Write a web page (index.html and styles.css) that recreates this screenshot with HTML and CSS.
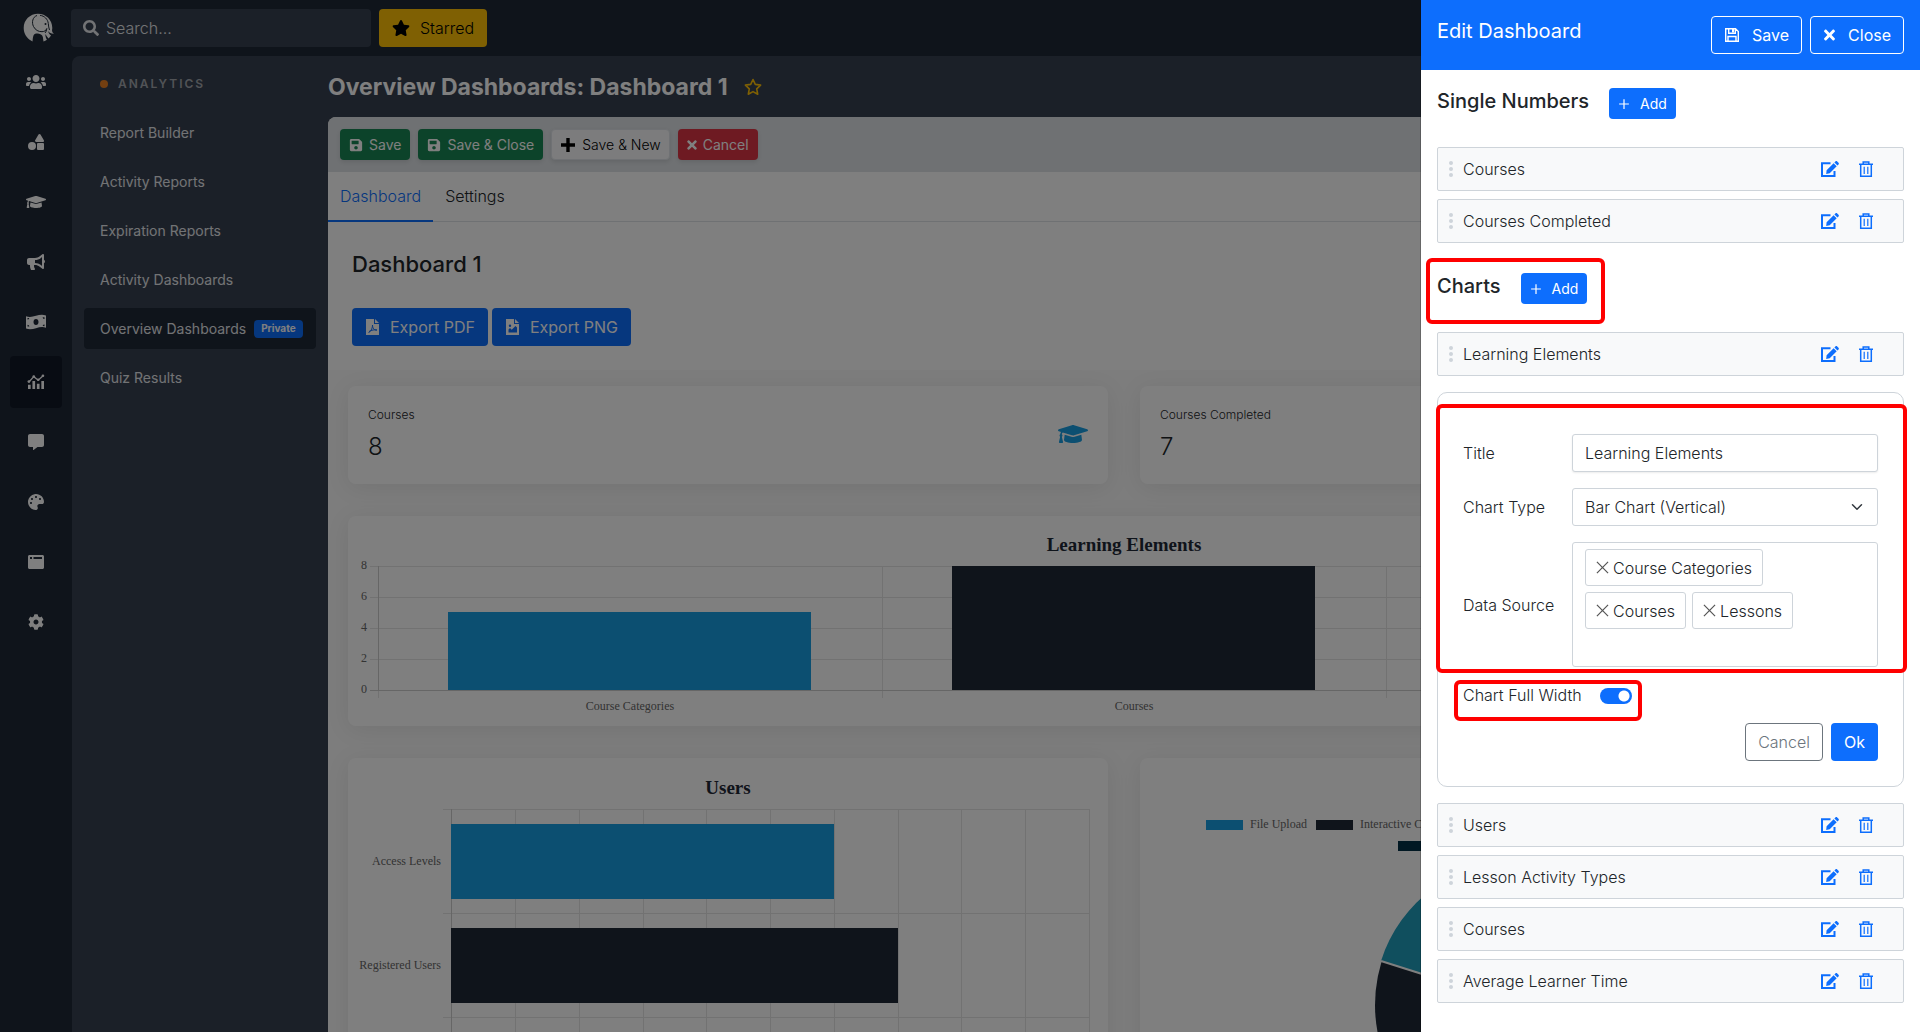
FILE: index.html
```html
<!DOCTYPE html>
<html lang="en">
<head>
<meta charset="utf-8">
<title>Overview Dashboards: Dashboard 1</title>
<link rel="stylesheet" href="styles.css">
</head>
<body>

<svg class="sprite" aria-hidden="true">
  <symbol id="i-logo" viewBox="0 0 31 30">
    <path fill="currentColor" d="M15 .8C7 .8.700 7 .700 15c0 5.500 3 10.300 7.600 12.700L9.500 28.500c.3-2 .2-4.200 1-6 .7-1.600 2.500-2.200 4.500-1.900 2.800.400 4.500 1.500 4.900 3.700.2 1.500.4 2.900.6 4.200 1.200-.4 2.400-1 3.400-1.700-.9-1.700-1.600-3.600-1.500-5.900 1 1.800 2 3.400 3.200 4.600 1-.9 1.700-1.800 2.400-2.900-1.700-1.100-2.500-2.600-3-4.500 1.500 1.900 3.500 2.900 6 2.700-1.500-.9-2.200-2.400-1.900-4.200.1-.6.200-1.100.2-1.600C29.300 7 23 .8 15 .8z"/>
    <path fill="none" stroke="#1e2836" d="M14 2.500C9.500 4 8.500 9.500 10.500 13.500c1.800 3.600 5 5.300 8.500 5.200 2.500-.1 4-1.200 4.800-3.200M17 2.300c4.500.7 7.700 3.700 8.300 8.200.3 2.500.4 4.500 1.200 6.500M23.800 15.500c-.3 2-.7 3.300-1.800 4.500"/>
    <circle cx="22.500" cy="11" r="1" fill="#1e2836"/>
  </symbol>
  <symbol id="i-search" viewBox="0 0 512 512"><path fill="currentColor" d="M505 442.700L405.300 343c-4.500-4.500-10.600-7-17-7H372c27.600-35.300 44-79.700 44-128C416 93.100 322.900 0 208 0S0 93.100 0 208s93.100 208 208 208c48.300 0 92.700-16.400 128-44v16.300c0 6.400 2.500 12.500 7 17l99.700 99.700c9.400 9.400 24.600 9.400 33.900 0l28.300-28.300c9.400-9.400 9.400-24.600.1-34zM208 336c-70.700 0-128-57.200-128-128 0-70.700 57.200-128 128-128 70.700 0 128 57.200 128 128 0 70.700-57.200 128-128 128z"/></symbol>
  <symbol id="i-star" viewBox="0 0 576 512"><path fill="currentColor" d="M259.300 17.800L194 150.200 47.900 171.500c-26.200 3.800-36.700 36.100-17.700 54.600l105.700 103-25 145.500c-4.500 26.300 23.200 46 46.400 33.700L288 439.600l130.700 68.700c23.200 12.200 50.900-7.400 46.400-33.700l-25-145.500 105.700-103c19-18.500 8.500-50.800-17.700-54.600L382 150.200 316.700 17.800c-11.700-23.600-45.600-23.900-57.400 0z"/></symbol>
  <symbol id="i-star-o" viewBox="0 0 18 18"><path fill="none" stroke="currentColor" stroke-width="1.600" stroke-linejoin="round" d="M9 1.500l2.300 4.900 5.300.7-3.900 3.700 1 5.400L9 13.600l-4.700 2.600 1-5.400L1.400 7.100l5.300-.7z"/></symbol>
  <symbol id="i-users" viewBox="0 0 640 512"><path fill="currentColor" d="M96 224c35.300 0 64-28.700 64-64s-28.700-64-64-64-64 28.700-64 64 28.700 64 64 64zm448 0c35.300 0 64-28.700 64-64s-28.700-64-64-64-64 28.700-64 64 28.700 64 64 64zm32 32h-64c-17.600 0-33.500 7.100-45.100 18.600 40.300 22.100 68.900 62 75.100 109.400h66c17.700 0 32-14.300 32-32v-32c0-35.300-28.700-64-64-64zm-256 0c61.900 0 112-50.100 112-112S381.900 32 320 32 208 82.100 208 144s50.100 112 112 112zm76.800 32h-8.300c-20.800 10-43.900 16-68.500 16s-47.600-6-68.500-16h-8.300C179.600 288 128 339.600 128 403.200V432c0 26.500 21.500 48 48 48h288c26.500 0 48-21.500 48-48v-28.800c0-63.600-51.600-115.200-115.200-115.200zm-223.700-13.400C161.500 263.100 145.600 256 128 256H64c-35.300 0-64 28.700-64 64v32c0 17.700 14.300 32 32 32h65.900c6.300-47.400 34.900-87.300 75.200-109.400z"/></symbol>
  <symbol id="i-shapes" viewBox="0 0 512 512"><path fill="currentColor" d="M128,256A128,128,0,1,0,256,384,128,128,0,0,0,128,256Zm379-54.860L400.070,18.290a37.260,37.260,0,0,0-64.140,0L229,201.140C214.760,225.520,232.580,256,261.090,256H474.910C503.420,256,521.240,225.520,507,201.140ZM480,288H320a32,32,0,0,0-32,32V480a32,32,0,0,0,32,32H480a32,32,0,0,0,32-32V320A32,32,0,0,0,480,288Z"/></symbol>
  <symbol id="i-cap" viewBox="0 0 640 512"><path fill="currentColor" d="M622.340 153.200L343.400 67.500c-15.200-4.670-31.600-4.670-46.790 0L17.660 153.200c-23.540 7.230-23.540 38.360 0 45.590l48.630 14.940c-10.670 13.190-17.230 29.280-17.880 46.900C38.780 266.150 32 276.110 32 288c0 10.780 5.680 19.850 13.860 25.650L20.330 428.530C18.110 438.520 25.710 448 35.940 448h56.110c10.240 0 17.840-9.480 15.620-19.470L82.140 313.650C90.320 307.850 96 298.780 96 288c0-11.570-6.470-21.250-15.660-26.870.76-15.020 8.440-28.300 20.690-36.720L296.600 284.500c9.060 2.780 26.440 6.250 46.790 0l278.950-85.700c23.550-7.240 23.550-38.360 0-45.600zM352.790 315.090c-28.530 8.760-52.840 3.920-65.590 0l-145.020-44.550L128 384c0 35.350 85.960 64 192 64s192-28.650 192-64l-14.180-113.470-145.030 44.560z"/></symbol>
  <symbol id="i-horn" viewBox="0 0 576 512"><path fill="currentColor" d="M576 240c0-23.630-12.950-44.040-32-55.120V32.010C544 23.260 537.020 0 512 0c-7.120 0-14.190 2.380-19.980 7.020l-85.030 68.030C364.280 109.190 310.660 128 256 128H64c-35.350 0-64 28.650-64 64v96c0 35.350 28.650 64 64 64h33.700c-1.390 10.480-2.180 21.140-2.180 32 0 39.770 9.260 77.350 25.560 110.940 5.190 10.690 16.520 17.060 28.400 17.060h74.280c26.050 0 41.690-29.840 25.900-50.560-16.400-21.520-26.150-48.360-26.150-77.440 0-11.110 1.620-21.790 4.410-32H256c54.660 0 108.280 18.810 150.980 52.950l85.030 68.030a32.023 32.023 0 0 0 19.980 7.020c24.920 0 32-22.780 32-32V295.130C563.050 284.040 576 263.630 576 240zm-96 141.420l-33.050-26.440C392.950 311.780 325.120 288 256 288v-96c69.120 0 136.950-23.780 190.950-66.980L480 98.580v282.840z"/></symbol>
  <symbol id="i-money" viewBox="0 0 20 16"><path fill="currentColor" fill-rule="evenodd" d="M0 2.200c3.500 1.300 6.500.5 10-.4 3.300-.9 6.500-1.500 10-.3v12.300c-3.500-1.300-6.500-.5-10 .4-3.300.9-6.500 1.500-10 .3zM10 5C8.500 5 7.500 6.300 7.500 8s1 3 2.500 3 2.500-1.300 2.500-3-1-3-2.500-3zM1.500 4v1.600c1 0 1.700-.7 1.700-1.500zM1.500 10.800v1.700l1.800.1c0-1-.8-1.800-1.800-1.800zM18.500 3.300l-1.800-.1c0 1 .8 1.800 1.800 1.800zM18.500 10.400c-1 0-1.800.7-1.800 1.700l1.800.2z"/></symbol>
  <symbol id="i-chart" viewBox="0 0 20 18"><path fill="currentColor" d="M1 12h3v5H1zM6 8h3v9H6zM11 11h3v6h-3zM16 8h3v9h-3z"/><path fill="none" stroke="currentColor" stroke-width="1.500" d="M2 9l5.500-6 5 4L18 2"/><circle cx="2" cy="8.500" r="1.500" fill="currentColor"/><circle cx="7.500" cy="2.800" r="1.500" fill="currentColor"/><circle cx="12.500" cy="6.500" r="1.500" fill="currentColor"/><circle cx="17.800" cy="2" r="1.500" fill="currentColor"/></symbol>
  <symbol id="i-comment" viewBox="0 0 512 512"><path fill="currentColor" d="M448 0H64C28.700 0 0 28.700 0 64v288c0 35.300 28.700 64 64 64h96v84c0 9.800 11.200 15.500 19.100 9.700L304 416h144c35.300 0 64-28.700 64-64V64c0-35.300-28.700-64-64-64z"/></symbol>
  <symbol id="i-palette" viewBox="0 0 512 512"><path fill="currentColor" d="M204.300 5C104.900 24.400 24.800 104.300 5.200 203.400c-37 187 131.700 326.400 258.800 306.700 41.200-6.400 61.400-54.600 42.500-91.700-23.100-45.400 9.900-98.400 60.900-98.400h79.700c35.800 0 64.800-29.600 64.900-65.300C511.500 97.100 368.100-26.900 204.300 5zM96 320c-17.700 0-32-14.300-32-32s14.300-32 32-32 32 14.300 32 32-14.300 32-32 32zm32-128c-17.700 0-32-14.300-32-32s14.300-32 32-32 32 14.300 32 32-14.300 32-32 32zm128-64c-17.700 0-32-14.300-32-32s14.300-32 32-32 32 14.300 32 32-14.300 32-32 32zm128 64c-17.700 0-32-14.300-32-32s14.300-32 32-32 32 14.300 32 32-14.300 32-32 32z"/></symbol>
  <symbol id="i-window" viewBox="0 0 16 16"><path fill="currentColor" fill-rule="evenodd" d="M1.500 1h13c.8 0 1.500.7 1.500 1.500v11c0 .8-.7 1.500-1.500 1.500h-13C.7 15 0 14.300 0 13.500v-11C0 1.700.7 1 1.500 1zM2 3v2h2V3zM5.500 3v2H14V3z"/></symbol>
  <symbol id="i-cog" viewBox="0 0 512 512"><path fill="currentColor" d="M487.400 315.700l-42.600-24.600c4.300-23.200 4.300-47 0-70.200l42.600-24.600c4.900-2.800 7.100-8.600 5.500-14-11.100-35.600-30-67.800-54.700-94.600-3.800-4.100-10-5.100-14.800-2.300L380.800 110c-17.900-15.400-38.500-27.300-60.800-35.100V25.800c0-5.600-3.900-10.500-9.400-11.700-36.700-8.200-74.300-7.800-109.200 0-5.500 1.200-9.400 6.100-9.400 11.700V75c-22.200 7.900-42.800 19.800-60.800 35.100L88.700 85.500c-4.900-2.800-11-1.900-14.800 2.300-24.700 26.700-43.600 58.900-54.700 94.600-1.700 5.400.6 11.200 5.500 14L67.300 221c-4.300 23.200-4.300 47 0 70.200l-42.600 24.600c-4.900 2.800-7.100 8.600-5.500 14 11.100 35.600 30 67.800 54.700 94.600 3.800 4.100 10 5.100 14.800 2.300l42.600-24.600c17.900 15.400 38.500 27.300 60.800 35.100v49.200c0 5.600 3.900 10.500 9.400 11.700 36.700 8.200 74.300 7.800 109.200 0 5.500-1.200 9.400-6.100 9.400-11.700v-49.200c22.200-7.900 42.800-19.800 60.800-35.100l42.600 24.600c4.900 2.800 11 1.900 14.800-2.300 24.700-26.700 43.600-58.900 54.700-94.600 1.500-5.500-.7-11.300-5.600-14.100zM256 336c-44.100 0-80-35.900-80-80s35.900-80 80-80 80 35.900 80 80-35.900 80-80 80z"/></symbol>
  <symbol id="i-save" viewBox="0 0 448 512"><path fill="currentColor" d="M433.941 129.941l-83.882-83.882A48 48 0 0 0 316.118 32H48C21.490 32 0 53.490 0 80v352c0 26.510 21.490 48 48 48h352c26.510 0 48-21.490 48-48V163.882a48 48 0 0 0-14.059-33.941zM224 416c-35.346 0-64-28.654-64-64 0-35.346 28.654-64 64-64s64 28.654 64 64c0 35.346-28.654 64-64 64zm96-304.520V212c0 6.627-5.373 12-12 12H76c-6.627 0-12-5.373-12-12V108c0-6.627 5.373-12 12-12h228.520c3.183 0 6.235 1.264 8.485 3.515l3.480 3.480A11.996 11.996 0 0 1 320 111.480z"/></symbol>
  <symbol id="i-floppy" viewBox="0 0 16 16"><path fill="none" stroke="currentColor" stroke-width="1.400" d="M1.700 1.700h9.800l2.800 2.800v9.800H1.700zM4 14V9.500h8V14M4.700 2v4.300h6.600V2"/><path fill="currentColor" d="M8 2h2v3.500H8z"/></symbol>
  <symbol id="i-times" viewBox="0 0 352 512"><path fill="currentColor" d="M242.720 256l100.070-100.070c12.280-12.280 12.280-32.190 0-44.480l-22.240-22.240c-12.280-12.280-32.190-12.280-44.480 0L176 189.280 75.930 89.210c-12.280-12.280-32.190-12.280-44.480 0L9.210 111.450c-12.280 12.280-12.280 32.190 0 44.480L109.280 256 9.210 356.070c-12.280 12.280-12.280 32.190 0 44.480l22.240 22.240c12.280 12.280 32.200 12.280 44.480 0L176 322.720l100.070 100.070c12.280 12.280 32.200 12.280 44.480 0l22.240-22.240c12.280-12.280 12.280-32.190 0-44.480L242.720 256z"/></symbol>
  <symbol id="i-plus" viewBox="0 0 16 16"><path fill="currentColor" d="M6.300 1h3.400v5.300H15v3.400H9.700V15H6.300V9.700H1V6.300h5.300z"/></symbol>
  <symbol id="i-plus-thin" viewBox="0 0 16 16"><path fill="none" stroke="currentColor" stroke-width="1.600" d="M8 1.500v13M1.500 8h13"/></symbol>
  <symbol id="i-pdf" viewBox="0 0 14 16"><path fill="currentColor" d="M0 0h8v5h5v11H0zM9 0l4 4H9z"/><path fill="none" stroke="#0d6efd" d="M2.500 13.500c2-.5 4-4 4-7.500 0 3.500 2 5.500 4.500 5-3-.5-5 0-8 1.500"/></symbol>
  <symbol id="i-png" viewBox="0 0 14 16"><path fill="currentColor" d="M0 0h8v5h5v11H0zM9 0l4 4H9z"/><path fill="#0d6efd" d="M2.500 13.500v-3l1.500-1.500 1.700 1.700L9.500 7l1.500 1.500v5z"/><circle cx="4" cy="6.800" r="1.200" fill="#0d6efd"/></symbol>
  <symbol id="i-edit" viewBox="0 0 18 16"><path fill="none" stroke="currentColor" stroke-width="2" d="M9.500 2.200H1V15h12.500V10"/><path fill="currentColor" d="M12.600 2.200l3.100 3.100-7 7-3.500.6.400-3.600zM13.400 1.400l1-1c.5-.5 1.300-.5 1.800 0l1.300 1.300c.5.500.5 1.300 0 1.800l-1 1z"/></symbol>
  <symbol id="i-trash" viewBox="0 0 14 16"><path fill="none" stroke="currentColor" stroke-width="1.500" d="M0 3.300h14M1.700 3.500v11.700h10.600V3.500M4.200 3V.9h5.600V3"/><path fill="none" stroke="currentColor" stroke-width="1.200" d="M5.200 5.800V13M8.800 5.800V13"/></symbol>
  <symbol id="i-grip" viewBox="0 0 4 16"><g fill="#ced4da"><circle cx="2" cy="2" r="2"/><circle cx="2" cy="8" r="2"/><circle cx="2" cy="14" r="2"/></g></symbol>
  <symbol id="i-x" viewBox="0 0 14 14"><path fill="none" stroke="currentColor" stroke-width="1.300" d="M1 1l12 12M13 1L1 13"/></symbol>
</svg>

<header class="topbar">
  <a class="logo" href="#" aria-label="Home"><svg><use href="#i-logo"/></svg></a>
  <label class="search">
    <svg class="icon"><use href="#i-search"/></svg>
    <input type="text" placeholder="Search..." aria-label="Search">
  </label>
  <button type="button" class="btn btn-warning"><svg class="icon"><use href="#i-star"/></svg>Starred</button>
</header>

<div class="shell">
  <nav class="rail" aria-label="Main">
    <a href="#" aria-label="Users"><svg class="wide"><use href="#i-users"/></svg></a>
    <a href="#" aria-label="Content"><svg><use href="#i-shapes"/></svg></a>
    <a href="#" aria-label="Courses"><svg class="wide"><use href="#i-cap"/></svg></a>
    <a href="#" aria-label="Marketing"><svg class="wide"><use href="#i-horn"/></svg></a>
    <a href="#" aria-label="Billing"><svg class="wide"><use href="#i-money"/></svg></a>
    <a href="#" aria-label="Analytics" class="active"><svg class="wide"><use href="#i-chart"/></svg></a>
    <a href="#" aria-label="Messages"><svg><use href="#i-comment"/></svg></a>
    <a href="#" aria-label="Themes"><svg><use href="#i-palette"/></svg></a>
    <a href="#" aria-label="Pages"><svg><use href="#i-window"/></svg></a>
    <a href="#" aria-label="Configuration"><svg><use href="#i-cog"/></svg></a>
  </nav>

  <div class="workspace">
    <nav class="submenu" aria-label="Analytics">
      <h2>ANALYTICS</h2>
      <a href="#">Report Builder</a>
      <a href="#">Activity Reports</a>
      <a href="#">Expiration Reports</a>
      <a href="#">Activity Dashboards</a>
      <a href="#" class="active">Overview Dashboards <span class="badge">Private</span></a>
      <a href="#">Quiz Results</a>
    </nav>

    <main class="main">
      <div class="page-title">
        <h1>Overview Dashboards: Dashboard 1</h1>
        <svg class="fav"><use href="#i-star-o"/></svg>
      </div>
      <div class="content">
        <div class="toolbar">
          <button type="button" class="btn btn-sm btn-success"><svg class="icon"><use href="#i-save"/></svg>Save</button>
          <button type="button" class="btn btn-sm btn-success"><svg class="icon"><use href="#i-save"/></svg>Save &amp; Close</button>
          <button type="button" class="btn btn-sm btn-light"><svg class="icon"><use href="#i-plus"/></svg>Save &amp; New</button>
          <button type="button" class="btn btn-sm btn-danger"><svg class="icon narrow"><use href="#i-times"/></svg>Cancel</button>
        </div>
        <div class="tabs">
          <a href="#" class="active">Dashboard</a>
          <a href="#">Settings</a>
        </div>
        <div class="intro">
          <h2>Dashboard 1</h2>
          <div class="exports">
            <button type="button" class="btn btn-primary"><svg class="icon"><use href="#i-pdf"/></svg>Export PDF</button>
            <button type="button" class="btn btn-primary"><svg class="icon"><use href="#i-png"/></svg>Export PNG</button>
          </div>
        </div>
        <div class="cards">
          <div class="card stat">
            <div><p>Courses</p><strong>8</strong></div>
            <svg><use href="#i-cap"/></svg>
          </div>
          <div class="card stat">
            <div><p>Courses Completed</p><strong>7</strong></div>
          </div>

          <div class="card full">
            <svg class="chart" viewBox="0 0 1552 210" role="img" aria-label="Learning Elements">
              <path class="grid" d="M22 50h1520M22 81h1520M22 112h1520M22 143h1520M30 50v132M534 50v132M1038 50v132M1542 50v132"/>
              <path class="axis" d="M22 174h1520M30 50v124"/>
              <rect class="blue" x="100" y="96" width="363" height="78"/>
              <rect class="dark" x="604" y="50" width="363" height="124"/>
              <text class="title" x="776" y="35">Learning Elements</text>
              <g class="end"><text x="19" y="53">8</text><text x="19" y="84">6</text><text x="19" y="115">4</text><text x="19" y="146">2</text><text x="19" y="177">0</text></g>
              <g class="mid"><text x="282" y="194">Course Categories</text><text x="786" y="194">Courses</text></g>
            </svg>
          </div>

          <div class="card">
            <svg class="chart" viewBox="0 0 760 400" role="img" aria-label="Users">
              <path class="grid" d="M95 51h647M95 155h647M95 259h647M167 51v312M231 51v312M295 51v312M358 51v312M422 51v312M486 51v312M550 51v312M613 51v312M677 51v312M741 51v312"/>
              <path class="axis" d="M103 51v312"/>
              <rect class="blue" x="103" y="66" width="383" height="75"/>
              <rect class="dark" x="103" y="170" width="447" height="75"/>
              <rect class="orange" x="103" y="274" width="256" height="75"/>
              <text class="title" x="380" y="36">Users</text>
              <g class="end"><text x="93" y="107">Access Levels</text><text x="93" y="211">Registered Users</text></g>
            </svg>
          </div>
          <div class="card">
            <svg class="chart" viewBox="0 0 760 400" role="img" aria-label="Lesson Activity Types">
              <rect class="blue" x="66" y="62" width="37" height="10"/>
              <rect class="dark" x="176" y="62" width="37" height="10"/>
              <rect class="navy" x="258" y="83" width="37" height="10"/>
              <text x="110" y="70">File Upload</text>
              <text x="220" y="70">Interactive Content</text>
              <circle class="dark" cx="380" cy="247" r="145"/>
              <path class="teal" d="M380 247L241 203A145 145 0 0 1 380 102z"/>
              <path class="cut" d="M380 247L241 203"/>
            </svg>
          </div>
        </div>
      </div>
    </main>
  </div>
</div>

<div class="backdrop"></div>

<aside class="panel" aria-label="Edit Dashboard">
  <div class="panel-head">
    <h2>Edit Dashboard</h2>
    <div class="actions">
      <button type="button" class="btn btn-outline-light"><svg class="icon"><use href="#i-floppy"/></svg>Save</button>
      <button type="button" class="btn btn-outline-light"><svg class="icon narrow"><use href="#i-times"/></svg>Close</button>
    </div>
  </div>

  <div class="panel-body">
    <div class="section-head">
      <h3>Single Numbers</h3>
      <button type="button" class="btn btn-sm btn-primary btn-add"><svg class="icon"><use href="#i-plus-thin"/></svg>Add</button>
    </div>
    <ul class="items">
      <li><svg class="grip"><use href="#i-grip"/></svg><span>Courses</span><button type="button" aria-label="Edit"><svg><use href="#i-edit"/></svg></button><button type="button" aria-label="Delete"><svg class="trash"><use href="#i-trash"/></svg></button></li>
      <li><svg class="grip"><use href="#i-grip"/></svg><span>Courses Completed</span><button type="button" aria-label="Edit"><svg><use href="#i-edit"/></svg></button><button type="button" aria-label="Delete"><svg class="trash"><use href="#i-trash"/></svg></button></li>
    </ul>

    <div class="section-head mark mark-head">
      <h3>Charts</h3>
      <button type="button" class="btn btn-sm btn-primary btn-add"><svg class="icon"><use href="#i-plus-thin"/></svg>Add</button>
    </div>
    <ul class="items">
      <li><svg class="grip"><use href="#i-grip"/></svg><span>Learning Elements</span><button type="button" aria-label="Edit"><svg><use href="#i-edit"/></svg></button><button type="button" aria-label="Delete"><svg class="trash"><use href="#i-trash"/></svg></button></li>
    </ul>

    <form class="editor">
      <div class="fields mark mark-fields">
        <label for="title">Title</label>
        <input class="control" id="title" type="text" value="Learning Elements">
        <label for="type">Chart Type</label>
        <select class="control" id="type"><option>Bar Chart (Vertical)</option></select>
        <span id="source">Data Source</span>
        <div class="control tags" role="group" aria-labelledby="source">
          <button type="button"><svg><use href="#i-x"/></svg>Course Categories</button>
          <button type="button"><svg><use href="#i-x"/></svg>Courses</button>
          <button type="button"><svg><use href="#i-x"/></svg>Lessons</button>
        </div>
      </div>
      <div class="switch mark mark-switch">
        <label for="full">Chart Full Width</label>
        <input id="full" type="checkbox" role="switch" checked>
      </div>
      <div class="actions">
        <button type="button" class="btn btn-outline-secondary">Cancel</button>
        <button type="button" class="btn btn-primary">Ok</button>
      </div>
    </form>

    <ul class="items">
      <li><svg class="grip"><use href="#i-grip"/></svg><span>Users</span><button type="button" aria-label="Edit"><svg><use href="#i-edit"/></svg></button><button type="button" aria-label="Delete"><svg class="trash"><use href="#i-trash"/></svg></button></li>
      <li><svg class="grip"><use href="#i-grip"/></svg><span>Lesson Activity Types</span><button type="button" aria-label="Edit"><svg><use href="#i-edit"/></svg></button><button type="button" aria-label="Delete"><svg class="trash"><use href="#i-trash"/></svg></button></li>
      <li><svg class="grip"><use href="#i-grip"/></svg><span>Courses</span><button type="button" aria-label="Edit"><svg><use href="#i-edit"/></svg></button><button type="button" aria-label="Delete"><svg class="trash"><use href="#i-trash"/></svg></button></li>
      <li><svg class="grip"><use href="#i-grip"/></svg><span>Average Learner Time</span><button type="button" aria-label="Edit"><svg><use href="#i-edit"/></svg></button><button type="button" aria-label="Delete"><svg class="trash"><use href="#i-trash"/></svg></button></li>
    </ul>
  </div>
</aside>

</body>
</html>
```

FILE: styles.css
```css
* {
  box-sizing: border-box;
}
body {
  margin: 0;
  height: 100vh;
  display: flex;
  flex-direction: column;
  overflow: hidden;
  background: #1e2836;
  color: #212529;
  font: 300 16px/24px Inter, sans-serif;
}
h1, h2, h3, p, ul {
  margin: 0;
  padding: 0;
}
a {
  text-decoration: none;
}
.sprite {
  position: absolute;
  width: 0;
  height: 0;
}

/* buttons */
.btn {
  display: inline-flex;
  align-items: center;
  gap: 12px;
  height: 38px;
  padding: 0 12px;
  border: 1px solid transparent;
  border-radius: 4px;
  background: none;
  color: #fff;
  font: 400 16px/24px Inter, sans-serif;
  white-space: nowrap;
}
.btn .icon {
  width: 16px;
  height: 16px;
}
.btn .narrow {
  width: 12px;
}
.btn-sm {
  height: 31px;
  padding: 0 8px;
  gap: 6px;
  font-size: 14px;
}
.btn-sm .icon {
  width: 14px;
  height: 14px;
}
.btn-sm .narrow {
  width: 10px;
}
.btn-warning {
  gap: 10px;
  background: #ffc107;
  color: #000;
  font-weight: 300;
}
.btn-warning .icon {
  width: 18px;
}
.btn-primary { background: #0d6efd; }
.btn-success { background: #198754; }
.btn-danger  { background: #dc3545; }
.btn-light {
  background: #f8f9fa;
  border-color: #dfe3e8;
  color: #000;
  font-weight: 300;
}
.btn-light .icon {
  width: 16px;
  height: 16px;
}
.btn-outline-light { border-color: #fff; }
.btn-outline-secondary {
  border-color: #6c757d;
  color: #6c757d;
  font-weight: 300;
}
.btn-add {
  gap: 10px;
}
.btn-add .icon {
  width: 12px;
}

/* top bar */
.topbar {
  display: flex;
  align-items: center;
  gap: 8px;
  height: 56px;
  padding: 0 0 0 23px;
}
.logo {
  display: flex;
  width: 40px;
  color: #fff;
}
.logo svg {
  width: 31px;
  height: 30px;
}
.search {
  display: flex;
  align-items: center;
  gap: 7px;
  width: 300px;
  height: 38px;
  padding: 0 12px;
  border-radius: 4px;
  background: #374151;
  color: #e5e7eb;
}
.search .icon {
  width: 16px;
  height: 16px;
  flex: none;
}
.search input {
  min-width: 0;
  flex: 1;
  padding: 0;
  border: 0;
  background: none;
  color: inherit;
  font: 300 16px/24px Inter, sans-serif;
}
.search input::placeholder {
  color: #e5e7eb;
}

/* shell */
.shell {
  flex: 1;
  min-height: 0;
  display: flex;
}
.rail {
  flex: none;
  width: 72px;
  display: flex;
  flex-direction: column;
  align-items: center;
  gap: 8px;
}
.rail a {
  width: 52px;
  height: 52px;
  display: flex;
  align-items: center;
  justify-content: center;
  border-radius: 4px;
  color: #fff;
}
.rail a.active {
  background: #111827;
}
.rail svg {
  width: 16px;
  height: 16px;
}
.rail svg.wide {
  width: 20px;
}
.workspace {
  flex: 1;
  min-width: 0;
  display: flex;
  border-radius: 8px 0 0 0;
  background: #374151;
}
.submenu {
  flex: none;
  width: 256px;
  padding: 20px 12px;
  display: flex;
  flex-direction: column;
  gap: 8px;
}
.submenu h2 {
  display: flex;
  align-items: center;
  gap: 10px;
  margin-bottom: 12px;
  padding-left: 16px;
  color: #a3a7ad;
  font-size: 12px;
  line-height: 16px;
  font-weight: 600;
  letter-spacing: 2px;
}
.submenu h2::before {
  content: "";
  width: 8px;
  height: 8px;
  border-radius: 50%;
  background: #e67e22;
}
.submenu a {
  display: flex;
  align-items: center;
  gap: 8px;
  height: 41px;
  padding: 0 16px;
  border-radius: 4px;
  color: #e5e7eb;
  font-size: 14px;
  font-weight: 400;
  white-space: nowrap;
}
.submenu a.active {
  background: #1e2836;
}
.badge {
  height: 18px;
  padding: 0 7px;
  border-radius: 4px;
  background: #0d6efd;
  color: #fff;
  font-size: 10px;
  line-height: 16px;
  font-weight: 700;
}

/* page */
.main {
  flex: 1;
  min-width: 0;
  display: flex;
  flex-direction: column;
}
.page-title {
  flex: none;
  display: flex;
  align-items: center;
  gap: 16px;
  height: 61px;
  color: #fff;
}
.page-title h1 {
  font-size: 23px;
  line-height: 30px;
  font-weight: 700;
}
.fav {
  width: 18px;
  height: 18px;
  color: #ffc107;
}
.content {
  flex: 1;
  min-height: 0;
  overflow: hidden;
  border-radius: 8px 0 0 0;
  background: #fff;
}
.toolbar {
  display: flex;
  gap: 8px;
  padding: 12px;
  background: #dee2e6;
}
.toolbar .btn {
  box-shadow: 0 2px 4px rgba(0, 0, 0, .1);
}
.tabs {
  display: flex;
  border-bottom: 1px solid #dee2e6;
}
.tabs a {
  height: 49px;
  padding: 12px;
  color: #212529;
}
.tabs a.active {
  color: #0d6efd;
  box-shadow: inset 0 -1px #0d6efd, 0 1px #0d6efd;
}
.intro {
  padding: 28px 24px 24px;
}
.intro h2 {
  margin-bottom: 30px;
  font-size: 22px;
  line-height: 28px;
  font-weight: 500;
}
.exports {
  display: flex;
  gap: 4px;
}
.exports .btn {
  gap: 9px;
}
.cards {
  display: grid;
  grid-template-columns: 1fr 1fr;
  gap: 32px;
  padding: 16px 20px;
  background: #fafafa;
}
.card {
  border-radius: 8px;
  background: #fff;
  box-shadow: 0 4px 24px rgba(0, 0, 0, .08);
}
.full {
  grid-column: span 2;
}
.stat {
  display: flex;
  align-items: center;
  justify-content: space-between;
  padding: 20px 20px 22px;
}
.stat p {
  margin-bottom: 8px;
  font-size: 12px;
  line-height: 18px;
}
.stat strong {
  display: block;
  font-size: 24px;
  line-height: 30px;
  font-weight: 300;
}
.stat svg {
  width: 30px;
  height: 24px;
  color: #189ee2;
}

/* charts */
.chart {
  display: block;
  width: 100%;
  fill: #666;
  font: 400 12px "Liberation Serif", serif;
}
.chart .grid,
.chart .axis {
  fill: none;
  stroke: #e5e5e5;
  shape-rendering: crispEdges;
}
.chart .axis { stroke: #ccc; }
.chart .blue { fill: #189ee2; }
.chart .dark { fill: #1e2836; }
.chart .navy { fill: #023047; }
.chart .teal { fill: #219ebc; }
.chart .orange { fill: #fb8500; }
.chart .cut { stroke: #fff; stroke-width: 2px; }
.chart .end { text-anchor: end; }
.chart .mid { text-anchor: middle; }
.chart .title {
  fill: #1e2836;
  font-size: 19px;
  font-weight: 700;
  text-anchor: middle;
}

/* side panel */
.backdrop {
  position: fixed;
  inset: 0;
  background: rgba(0, 0, 0, .5);
}
.panel {
  position: fixed;
  top: 0;
  right: 0;
  bottom: 0;
  width: 500px;
  max-width: 100%;
  overflow: hidden;
  border-left: 1px solid rgba(0, 0, 0, .2);
  background: #fff;
  background-clip: padding-box;
}
.panel-head {
  display: flex;
  justify-content: space-between;
  align-items: flex-start;
  padding: 16px;
  background: #0d6efd;
  color: #fff;
}
.panel-head h2 {
  font-size: 20px;
  line-height: 30px;
  font-weight: 400;
}
.panel-head .narrow {
  width: 13px;
}
.actions {
  display: flex;
  justify-content: flex-end;
  gap: 8px;
}
.panel-body {
  padding: 18px 16px;
}
.section-head {
  display: flex;
  align-items: flex-start;
  gap: 20px;
  width: fit-content;
  margin-bottom: 28px;
}
.section-head h3 {
  font-size: 20px;
  line-height: 26px;
  font-weight: 500;
}
.items {
  display: grid;
  gap: 8px;
  list-style: none;
}
.items + .section-head {
  margin-top: 30px;
}
.items li {
  display: flex;
  align-items: center;
  height: 44px;
  padding: 0 30px 0 11px;
  border: 1px solid #ced4da;
  border-radius: 2px;
  background: #f8f9fa;
}
.items span {
  flex: 1;
}
.items .grip {
  width: 4px;
  height: 16px;
  margin-right: 10px;
}
.items button {
  display: flex;
  margin-left: 20px;
  padding: 0;
  border: 0;
  background: none;
  color: #0d6efd;
}
.items button svg {
  width: 18px;
  height: 16px;
}
.items button .trash {
  width: 14px;
}
.editor {
  display: grid;
  gap: 16px;
  margin: 16px 0;
  padding: 41px 25px 25px;
  border: 1px solid #ced4da;
  border-radius: 10px;
}
.fields {
  display: grid;
  grid-template-columns: 109px 1fr;
  gap: 16px 0;
  align-items: center;
}
.control {
  width: 100%;
  min-height: 38px;
  padding: 0 12px;
  border: 1px solid #ced4da;
  border-radius: 3px;
  background: #fff;
  color: #212529;
  font: 300 16px/24px Inter, sans-serif;
}
input.control {
  box-shadow: 0 1px 2px rgba(0, 0, 0, .08);
}
select.control {
  appearance: none;
  background: #fff url("data:image/svg+xml,%3Csvg xmlns='http://www.w3.org/2000/svg' viewBox='0 0 16 16'%3E%3Cpath fill='none' stroke='%23343a40' stroke-width='2' stroke-linecap='round' stroke-linejoin='round' d='M2 5l6 6 6-6'/%3E%3C/svg%3E") no-repeat right 14px center / 12px;
}
.tags {
  display: flex;
  flex-wrap: wrap;
  align-content: flex-start;
  gap: 6px;
  min-height: 125px;
  padding: 6px 12px;
}
.tags button {
  display: flex;
  align-items: center;
  gap: 4px;
  height: 37px;
  padding: 0 10px;
  border: 1px solid #ced4da;
  border-radius: 3px;
  background: #fff;
  color: #212529;
  font: 300 16px/24px Inter, sans-serif;
}
.tags svg {
  width: 13px;
  height: 13px;
  color: #555;
}
.switch {
  display: flex;
  align-items: center;
  gap: 18px;
  width: fit-content;
}
.switch input {
  appearance: none;
  width: 32px;
  height: 16px;
  margin: 2px 0 0;
  border-radius: 8px;
  background: #0d6efd radial-gradient(circle at 24px 8px, #fff 5px, transparent 6px);
}

/* highlighted areas */
.mark {
  position: relative;
}
.mark::after {
  content: "";
  position: absolute;
  border: 4px solid #f00;
  border-radius: 6px;
  pointer-events: none;
}
.mark-head::after { inset: -15px -18px -20px -11px; }
.mark-fields::after { inset: -30px -29px -6px -27px; }
.mark-switch::after { inset: -3px -10px -14px -9px; }
```
